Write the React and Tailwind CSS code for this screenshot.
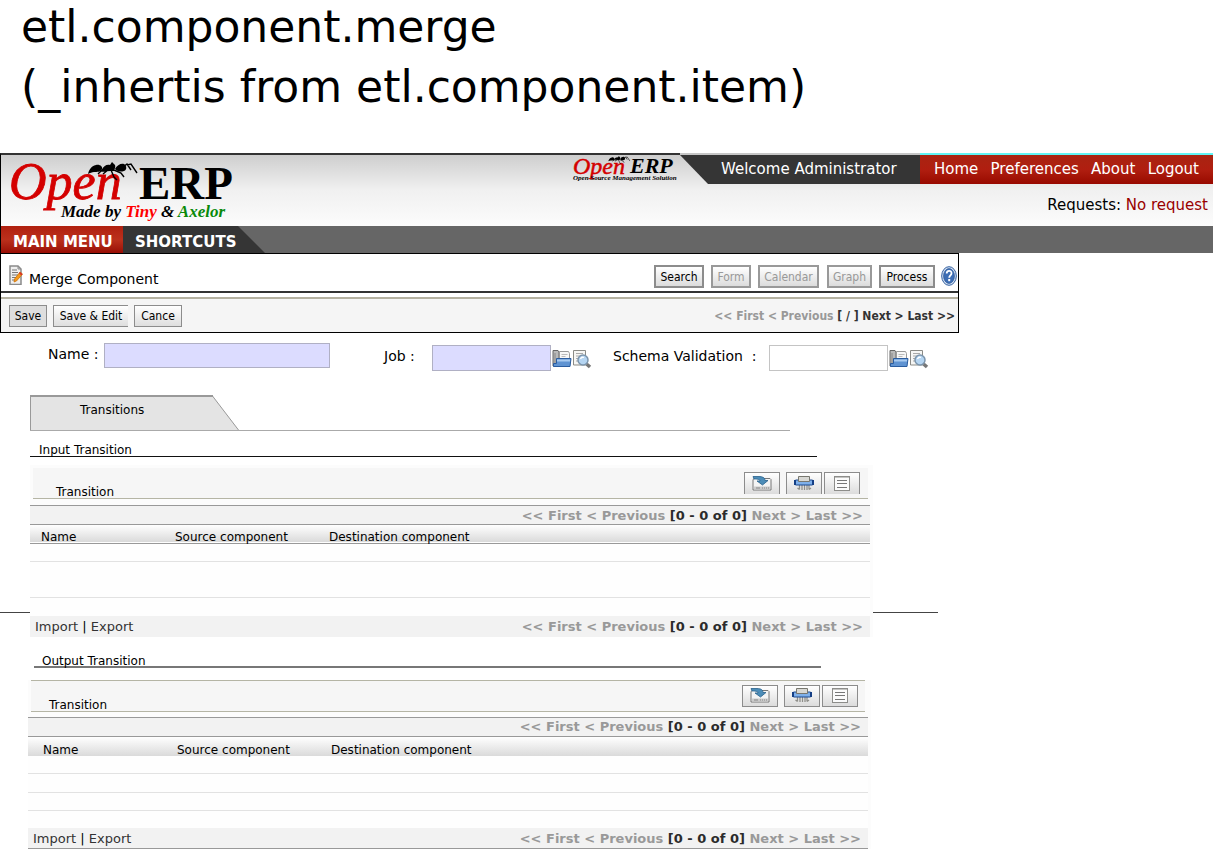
import React from 'react';

function Ant() {
  return (
    <g>
      <path d="M87 19c1-4 3-8 8-9 4-1 7 2 6 4-1 3-5 3-8 3-2 0-4 1-6 2z" />
      <path d="M101 15c1-4 5-6 8-5l2-3 3 3c1 3-1 6-4 6z" />
      <path d="M114 14c2-4 6-6 9-5 3 2 3 6 0 7-3 1-6 1-9-2z" />
      <path d="M122 12l4-3 4 6M126 10l4-1 6 9M102 14l-5 5M110 15l3 7 3 3M107 15l-5 4M113 15l7 3 3 4M99 16l14-1" fill="none" stroke="#000" strokeWidth="1.400" />
    </g>
  );
}

function Logo() {
  return (
    <svg className="overflow-visible" width="235" height="71" viewBox="0 0 235 71" role="img" aria-label="Open ERP">
      <text x="8" y="44" fontFamily="Liberation Serif, serif" fontStyle="italic" fontSize="52" fill="#d40000" stroke="#d40000" strokeWidth="0.8">Open</text>
      <text x="138" y="44" fontFamily="Liberation Serif, serif" fontWeight="bold" fontSize="47">ERP</text>
      <Ant />
      <text x="60" y="62" fontFamily="Liberation Serif, serif" fontStyle="italic" fontWeight="bold" fontSize="17">
        Made by <tspan fill="#f00">Tiny</tspan> &amp; <tspan fill="#0a8a0a">Axelor</tspan>
      </text>
    </svg>
  );
}

function SmallLogo() {
  return (
    <svg className="overflow-visible" width="104" height="30" viewBox="0 0 104 30" role="img" aria-label="Open ERP">
      <text x="1" y="19" fontFamily="Liberation Serif, serif" fontStyle="italic" fontSize="24" fill="#d40000" stroke="#d40000" strokeWidth="0.5">Open</text>
      <text x="58" y="18" fontFamily="Liberation Serif, serif" fontStyle="italic" fontWeight="bold" fontSize="22">ERP</text>
      <g transform="translate(-2 -2) scale(.44)"><Ant /></g>
      <text x="1" y="25" fontFamily="Liberation Serif, serif" fontStyle="italic" fontWeight="bold" fontSize="7">Open Source Management Solution</text>
    </svg>
  );
}

function EditIcon() {
  return (
    <svg width="14" height="20" viewBox="0 0 14 20" aria-hidden="true">
      <path d="M1 1h8l3 3v15.500H1z" fill="#efefef" stroke="#8a8a8a" strokeWidth="1.500" />
      <path d="M9 1v3h3" fill="none" stroke="#8a8a8a" />
      <path d="M3 5h5M3 7.500h6M3 10h6M3 12.500h4M3 15h3" stroke="#777" />
      <path d="M11 7l2.500 2-6 7-2.500 1 .5-3z" fill="#f59a1b" stroke="#c86a00" strokeWidth=".7" />
      <path d="M11 7l2.500 2-1 1.500L10 8.500z" fill="#d8322a" />
    </svg>
  );
}

function HelpIcon() {
  return (
    <svg width="16" height="20" viewBox="0 0 16 20" aria-hidden="true">
      <ellipse cx="8" cy="10" rx="7.300" ry="9.300" fill="#dce8f8" stroke="#2c5a9c" />
      <ellipse cx="8" cy="10" rx="5.500" ry="7.500" fill="#3c6db4" stroke="#27508e" strokeWidth=".6" />
      <path d="M5.700 7.600C5.700 4 10.500 4 10.500 7.200c0 2.200-2.300 2.100-2.300 4.600" fill="none" stroke="#fff" strokeWidth="1.800" />
      <rect x="7.200" y="13" width="2" height="2.200" fill="#fff" />
    </svg>
  );
}

function FolderIcon() {
  return (
    <svg width="20" height="19" viewBox="0 0 20 19" aria-hidden="true">
      <path d="M1 1.500h5l1 1.500v14H1z" fill="#b9b9b9" stroke="#666" />
      <path d="M3 4v11" stroke="#888" />
      <path d="M7.500 2.500h9l1 2v8h-10z" fill="#f7f7f7" stroke="#999" />
      <path d="M9.500 5.500h6M9.500 7.500h4" stroke="#bbb" />
      <path d="M4.500 9.500h14.500l-1 8H1.500v-3h3z" fill="#5f93d2" stroke="#2a5c9f" />
      <path d="M5 11.500h13" stroke="#a8caf0" strokeWidth="2" />
    </svg>
  );
}

function FindIcon() {
  return (
    <svg width="20" height="20" viewBox="0 0 20 20" aria-hidden="true">
      <path d="M1.500 1.500h12v14.500h-12z" fill="#f6f6f4" stroke="#8b8b86" />
      <path d="M4 4.500h7M4 7h4M4 9.500h2M4 12h2" stroke="#aaa" />
      <path d="M14.500 15l3.500 3" stroke="#777" strokeWidth="3.500" />
      <circle cx="11" cy="11" r="5" fill="#b5d5f2" stroke="#7b94ac" strokeWidth="1.500" />
      <path d="M8.500 10c.6-1.500 2-2 3.500-1.500" fill="none" stroke="#fff" strokeWidth="1.300" />
    </svg>
  );
}

function SaveDiskIcon() {
  return (
    <svg width="20" height="15" viewBox="0 0 20 15" aria-hidden="true">
      <path d="M2.500 2.500h15.500l1 1v10.500h-18V3.500z" fill="#f4f4f4" stroke="#777" />
      <path d="M2 10.500h16v3h-16z" fill="#ccc" />
      <path d="M4 12h4M10 12h1M12 12h1M14 12h1M16 12h1" stroke="#888" />
      <path d="M1 .5h6c4 0 6 1.500 6 4h3L10.500 9 5 5h3C8 3.500 6 3 2 3z" fill="#4d8db8" stroke="#28618c" strokeWidth=".8" />
    </svg>
  );
}

function ShredIcon() {
  return (
    <svg width="20" height="15" viewBox="0 0 20 15" aria-hidden="true">
      <path d="M5.500 9v4.500M8 9v5M10.500 9v5M13 9v5M15 9v4.500M5.500 13.500L3.500 12M15 13.500l2-1.500" fill="none" stroke="#8f8f8a" strokeWidth="1.300" />
      <path d="M1.500 4h17v5h-17z" fill="#7fb0ea" stroke="#1d4b91" />
      <path d="M1 4v5M19 4v5" stroke="#153f85" strokeWidth="2" />
      <path d="M4.500 .5h11v5h-11z" fill="#d8d8d4" stroke="#77776f" />
    </svg>
  );
}

function ListIcon() {
  return (
    <svg width="16" height="15" viewBox="0 0 16 15" aria-hidden="true">
      <rect x=".5" y=".5" width="15" height="14" fill="#fbfbfb" stroke="#8d8d8a" />
      <path d="M1 1h14" stroke="#8d8d8a" />
      <path d="M3 4.500h10M3 7.500h10M3 11.500h10" stroke="#777" />
    </svg>
  );
}

const face = 'bg-linear-to-b from-white to-[#dcdcdc] border-[#8c8c8c]';

function ViewButton({ children, disabled, className }) {
  return (
    <button
      disabled={disabled}
      className={`h-[23px] border-2 text-[12px] leading-none whitespace-nowrap font-['DejaVu_Sans_Condensed','DejaVu_Sans',sans-serif] text-black disabled:text-[#999] disabled:border-[#999] ${face} ${className}`}
    >
      {children}
    </button>
  );
}

function ActionButton({ children, className }) {
  return (
    <button className={`h-[22px] text-[12px] leading-none whitespace-nowrap font-['DejaVu_Sans_Condensed','DejaVu_Sans',sans-serif] text-black border-[#8c8c8c] ${className}`}>
      {children}
    </button>
  );
}

function Lookup({ id, label, labelClass, inputClass }) {
  return (
    <div className="flex">
      <label htmlFor={id} className={`pt-px leading-5 whitespace-pre ${labelClass}`}>{label}</label>
      <input id={id} type="text" className={`w-[119px] h-[26px] border px-1 ${inputClass}`} />
      <button aria-label="Open record" className="ml-px mt-[3px] h-5 w-5"><FolderIcon /></button>
      <button aria-label="Find record" className="mt-1 h-5 w-5"><FindIcon /></button>
    </div>
  );
}

function Pager() {
  return (
    <nav className="text-[13px] leading-none font-bold text-[#999] whitespace-nowrap font-['DejaVu_Sans',sans-serif]">
      &lt;&lt; First &lt; Previous <span className="text-[#2b2b2b]">[0 - 0 of 0]</span> Next &gt; Last &gt;&gt;
    </nav>
  );
}

function TransitionList({ className, toolbarClass, titleClass, toolClass, listClass, rowClass, headPad, headClass, rows, footClass }) {
  return (
    <section className={`relative bg-[#fcfcfc] ${className}`}>
      <div className={`flex justify-between border-b border-[#b5b5a5] bg-[#f6f6f6] ${toolbarClass}`}>
        <h3 className={`self-end leading-none ${titleClass}`}>Transition</h3>
        <div className="flex pt-1">
          <button aria-label="Save list" className={`mr-[6px] grid w-9 place-items-center ${face} ${toolClass}`}><SaveDiskIcon /></button>
          <button aria-label="Delete" className={`mr-[2px] grid w-9 place-items-center ${face} ${toolClass}`}><ShredIcon /></button>
          <button aria-label="Show list" className={`grid w-9 place-items-center ${face} ${toolClass}`}><ListIcon /></button>
        </div>
      </div>
      <div className={`mr-[3px] bg-[#fefefe] ${listClass}`}>
        <div className="flex h-5 items-center justify-end border-y border-[#999] bg-[#f2f2f2] pr-[7px]"><Pager /></div>
        <table className="w-full table-fixed border-collapse text-left">
          <thead className={`bg-linear-to-b from-white to-[#dadada] ${headClass}`}>
            <tr className={`align-bottom leading-3 ${rowClass}`}>
              <th className={`w-[134px] p-0 font-normal ${headPad}`}>Name</th>
              <th className={`w-[154px] p-0 font-normal ${headPad}`}>Source component</th>
              <th className={`p-0 font-normal ${headPad}`}>Destination component</th>
            </tr>
          </thead>
          <tbody>
            {rows.map((h, i) => (
              <tr key={i} className={`border-b border-[#e2e2e2] last:border-[#f2f2f2] ${h}`}><td colSpan="3" className="p-0" /></tr>
            ))}
          </tbody>
        </table>
        <div className={`flex h-5 items-center justify-between bg-[#f2f2f2] pr-[7px] pl-[5px] ${footClass}`}>
          <div className="text-[13px] leading-none text-[#333]">
            <a href="#import">Import</a> <span className="text-black">|</span> <a href="#export">Export</a>
          </div>
          <Pager />
        </div>
      </div>
    </section>
  );
}

export default function App() {
  return (
    <main className="flow-root bg-white text-[12px] text-black font-['DejaVu_Sans',sans-serif]">
      <h1 className="-mt-1 h-[157px] pt-px pl-[21px] text-[44px] leading-[60px]">
        <span className="block">etl.component.merge</span>
        <span className="block">(_inhertis from etl.component.item)</span>
      </h1>

      <header>
        <div className="flex h-[73px] bg-linear-to-b from-[#cccccc] via-[#f0f0f0] to-[#fcfcfc]">
          <div className="flex flex-1 items-start justify-between border-t-2 border-l border-t-[#333] border-l-black">
            <Logo />
            <div className="mr-1"><SmallLogo /></div>
          </div>
          <div className="text-[15px]">
            <div className="flex">
              <div className="border-t-2 border-[#c6c6c6]">
                <div className="h-[29px] w-[240px] bg-[#353535] pl-[41px] leading-7 text-white [clip-path:polygon(0_0,100%_0,100%_100%,28px_100%)]">Welcome Administrator</div>
              </div>
              <nav className="flex h-[31px] w-[293px] justify-between border-t-2 border-[#5ff5f5] bg-linear-to-b from-[#a82412] via-[#b01e10] to-[#980800] pr-[14px] pl-[14px] leading-7 text-white">
                <a href="#home">Home</a><a href="#preferences">Preferences</a><a href="#about">About</a><a href="#logout">Logout</a>
              </nav>
            </div>
            <p className="pt-[11px] pr-[5px] text-right leading-5">Requests: <a href="#requests" className="text-[#900]">No request</a></p>
          </div>
        </div>
        <nav className="flex h-[27px] border-l border-black bg-[#666] text-[15px] leading-8 font-bold text-white">
          <a href="#menu" className="w-[122px] bg-linear-to-b from-[#b0200f] via-[#bb301c] to-[#990d05] pl-3 whitespace-nowrap">MAIN MENU</a>
          <a href="#shortcuts" className="w-[142px] bg-[#353535] pl-3 [clip-path:polygon(0_0,115px_0,100%_100%,0_100%)]">SHORTCUTS</a>
        </nav>
      </header>

      <section className="mr-[254px] border border-black">
        <div className="flex h-[39px] items-start justify-between border-b-2 border-[#333] pt-[11px] pl-2 pr-px">
          <div className="flex items-start">
            <EditIcon />
            <h2 className="ml-[6px] pt-[4px] text-[14px] leading-5">Merge Component</h2>
          </div>
          <div className="flex">
            <ViewButton className="mr-[7px] w-[50px]">Search</ViewButton>
            <ViewButton disabled className="mr-[7px] w-10">Form</ViewButton>
            <ViewButton disabled className="mr-2 w-[61px]">Calendar</ViewButton>
            <ViewButton disabled className="mr-[7px] w-[45px]">Graph</ViewButton>
            <ViewButton className="mr-[6px] w-14">Process</ViewButton>
            <button aria-label="Help" className="h-5 w-4 mt-px"><HelpIcon /></button>
          </div>
        </div>
        <div className="mt-1 flex h-[35px] justify-between border-t-2 border-[#b5b1a0] bg-[#f5f5f5] pt-[6px] pl-2 pr-[3px]">
          <div className="flex">
            <ActionButton className="mr-[6px] w-[38px] border bg-[#dedede]">Save</ActionButton>
            <ActionButton className="mr-[6px] w-[75px] border border-r-0 bg-linear-to-b from-white to-[#dedede]">Save &amp; Edit</ActionButton>
            <ActionButton className="w-12 border bg-linear-to-b from-white to-[#dedede]">Cance</ActionButton>
          </div>
          <nav className="text-[12px] leading-[22px] font-bold text-[#333] font-['DejaVu_Sans_Condensed','DejaVu_Sans',sans-serif]">
            <span className="text-[#999]">&lt;&lt; First &lt; Previous</span> [ / ] Next &gt; Last &gt;&gt;
          </nav>
        </div>
      </section>

      <form className="flex h-[62px] pt-[10px] text-[14px]" onSubmit={(e) => e.preventDefault()}>
        <label htmlFor="name" className="w-[104px] pl-12 leading-5 pt-[1px] whitespace-nowrap">Name :</label>
        <input id="name" type="text" className="h-[25px] w-[226px] border border-[#b0b0c4] bg-[#dcdcff] px-1" />
        <div className="mt-[2px] ml-[54px] flex">
          <Lookup id="job" label="Job :" labelClass="w-12" inputClass="border-[#b0b0c4] bg-[#dcdcff]" />
          <div className="ml-[21px]">
            <Lookup id="schema" label={'Schema Validation  :'} labelClass="w-[156px]" inputClass="border-[#c4c4c4] bg-white" />
          </div>
        </div>
      </form>

      <div className="mr-[423px] ml-[30px] border-b border-[#aaa]">
        <div className="relative h-[35px] w-[209px]">
          <svg className="absolute inset-0" width="209" height="35" viewBox="0 0 209 35" aria-hidden="true">
            <path d="M.5 35V1h182l26 34" fill="#e4e4e4" stroke="#999" />
            <path d="M0 1h183" stroke="#999" strokeWidth="2" />
          </svg>
          <button className="relative block pt-[7px] pl-[50px] leading-4">Transitions</button>
        </div>
      </div>

      <h3 className="mr-[396px] ml-[30px] mt-[13px] h-[13px] border-b border-[#111] pl-[9px] leading-3">Input Transition</h3>

      <div className="relative mt-[8px]">
        <div className="absolute top-[147px] right-[275px] left-0 h-px bg-[#444]" />
        <TransitionList
          className="mr-[340px] ml-[30px] pt-[3px]"
          toolbarClass="h-[31px] ml-[3px] mr-[5px] pr-2"
          titleClass="pl-[23px]"
          toolClass="h-[22px] border border-b-0"
          listClass="mt-[6px]"
          rowClass="h-[18px]"
          headPad="pl-[11px]"
          headClass="border-b border-[#999]"
          rows={['h-[18px]', 'h-[36px]', 'h-[19px]']}
          footClass=""
        />
      </div>

      <h3 className="mr-[392px] ml-[34px] mt-[18px] h-[13px] border-b-2 border-[#777] pl-2 leading-3">Output Transition</h3>
      <TransitionList
        className="mr-[342px] ml-[28px] mt-[12px]"
        toolbarClass="h-8 ml-[3px] mr-[6px] pr-[7px] border-t"
        titleClass="pl-[18px]"
        toolClass="h-[22px] border"
        listClass="mt-[5px]"
        rowClass="h-[19px]"
        headPad="pl-[15px]"
        headClass=""
        rows={['h-[18px]', 'h-[19px]', 'h-[18px]', 'h-[18px]']}
        footClass="border-b border-[#999]"
      />
    </main>
  );
}
